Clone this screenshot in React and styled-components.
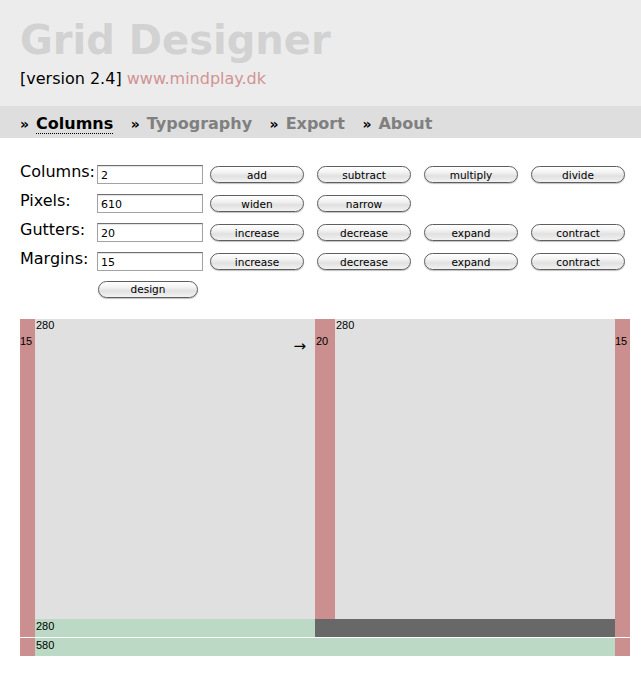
import React from 'react';
import styled, { createGlobalStyle } from 'styled-components';

const GlobalStyle = createGlobalStyle`
    html, body {
        margin: 0;
        padding: 0;
        background: #ffffff;
        font-family: "DejaVu Sans", Verdana, sans-serif;
        color: #000;
    }
`;

const Header = styled.header`
    background: #ececec;
    height: 106px;
    padding: 16px 20px 0;
    box-sizing: border-box;
`;

const Title = styled.h1`
    margin: 0;
    font-size: 40px;
    line-height: 48px;
    font-weight: bold;
    color: #d2d2d2;
`;

const Version = styled.div`
    margin-top: 5px;
    font-size: 16px;
    line-height: 20px;

    a {
        color: #d19393;
        text-decoration: none;
    }
`;

const Nav = styled.nav`
    background: #dedede;
    height: 32px;
    box-sizing: border-box;
    display: flex;
    align-items: center;
    gap: 17.5px;
    padding: 3px 20px 0;
`;

const NavItem = styled.span`
    font-size: 16px;
    font-weight: bold;
    line-height: 20px;
    color: #000;

    a {
        margin-left: 7px;
        text-decoration: none;
        color: ${(p) => (p.$active ? '#000' : '#808080')};
        border-bottom: ${(p) => (p.$active ? '1px dotted #000' : 'none')};
    }
`;

const Quote = styled.span`
    font-size: 14px;
`;

const Form = styled.div`
    padding: 27px 20px 0;
`;

const FieldRow = styled.div`
    display: flex;
    align-items: flex-start;
    margin-bottom: 10px;
`;

const Label = styled.label`
    flex: none;
    width: 77px;
    font-size: 16px;
    line-height: 18px;
    margin-top: -2px;
`;

const Input = styled.input`
    flex: none;
    width: 106px;
    height: 19px;
    box-sizing: border-box;
    border: 1px solid #a3a3a3;
    border-top-color: #6f6f6f;
    box-shadow: inset 0 1px 1px rgba(0, 0, 0, 0.12);
    padding: 1px 3px 0;
    font-family: "DejaVu Sans", Verdana, sans-serif;
    font-size: 11px;
    margin: 0;
    outline: none;
`;

const Buttons = styled.div`
    display: flex;
    gap: 13px;
    margin-left: 7px;
    padding-top: 1px;
`;

const Button = styled.button`
    flex: none;
    width: ${(p) => (p.$wide ? '100px' : '94px')};
    height: 17px;
    box-sizing: border-box;
    border: 1px solid #5e5e5e;
    border-radius: 9px;
    background: linear-gradient(to bottom, #ffffff 0%, #f3f3f3 35%, #e1e1e1 60%, #f2f2f2 100%);
    box-shadow: 0 1px 1px rgba(0, 0, 0, 0.25);
    font-family: "DejaVu Sans", Verdana, sans-serif;
    font-size: 10.5px;
    line-height: 14px;
    color: #000;
    padding: 0;
    margin: 0;
    cursor: pointer;
`;

const DesignRow = styled.div`
    padding-left: 78px;
    margin-top: -3px;
`;

const Grid = styled.div`
    margin: 21px 11px 0 20px;
    width: 610px;
    font-family: "Liberation Sans", Arial, sans-serif;
    font-size: 11px;
    line-height: 13px;
`;

const GridRow = styled.div`
    display: flex;
    height: ${(p) => p.$height}px;
    & + & {
        margin-top: 1px;
    }
`;

const Margin = styled.div`
    width: 15px;
    flex: none;
    background: #cc8f8f;
    padding-top: ${(p) => (p.$label ? '16px' : '0')};
    box-sizing: border-box;
`;

const Column = styled.div`
    position: relative;
    width: ${(p) => p.$width}px;
    flex: none;
    display: flex;
    flex-direction: column;
`;

const Area = styled.div`
    flex: 1;
    background: ${(p) => p.$bg};
    padding-top: ${(p) => p.$pad || 0}px;
    padding-left: 1px;
    box-sizing: border-box;
`;

const Strip = styled.div`
    height: 18px;
    flex: none;
    background: ${(p) => p.$bg};
    padding: 1px 0 0 1px;
    box-sizing: border-box;
`;

const Arrow = styled.span`
    position: absolute;
    right: 9px;
    top: 19px;
    font-family: "DejaVu Sans", sans-serif;
    font-size: 15px;
    line-height: 16px;
`;

const GREEN = '#bbd9c4';
const GRAY = '#e0e0e0';
const DARK = '#686868';
const PINK = '#cc8f8f';

const rows = [
    { label: 'Columns:', value: '2', buttons: ['add', 'subtract', 'multiply', 'divide'] },
    { label: 'Pixels:', value: '610', buttons: ['widen', 'narrow'] },
    { label: 'Gutters:', value: '20', buttons: ['increase', 'decrease', 'expand', 'contract'] },
    { label: 'Margins:', value: '15', buttons: ['increase', 'decrease', 'expand', 'contract'] },
];

const navItems = ['Columns', 'Typography', 'Export', 'About'];

export default function App() {
    return (
        <>
            <GlobalStyle />
            <Header>
                <Title>Grid Designer</Title>
                <Version>
                    [version 2.4] <a href="#">www.mindplay.dk</a>
                </Version>
            </Header>
            <Nav>
                {navItems.map((item, i) => (
                    <NavItem key={item} $active={i === 0}>
                        <Quote>»</Quote>
                        <a href="#">{item}</a>
                    </NavItem>
                ))}
            </Nav>

            <Form>
                {rows.map((row) => (
                    <FieldRow key={row.label}>
                        <Label>{row.label}</Label>
                        <Input defaultValue={row.value} />
                        <Buttons>
                            {row.buttons.map((b) => (
                                <Button key={b}>{b}</Button>
                            ))}
                        </Buttons>
                    </FieldRow>
                ))}
                <DesignRow>
                    <Button $wide>design</Button>
                </DesignRow>
            </Form>

            <Grid>
                <GridRow $height={318}>
                    <Margin $label>15</Margin>
                    <Column $width={280}>
                        <Area $bg={GRAY}>280</Area>
                        <Strip $bg={GREEN}>280</Strip>
                        <Arrow>→</Arrow>
                    </Column>
                    <Column $width={20}>
                        <Area $bg={PINK} $pad={16}>20</Area>
                        <Strip $bg={DARK} />
                    </Column>
                    <Column $width={280}>
                        <Area $bg={GRAY}>280</Area>
                        <Strip $bg={DARK} />
                    </Column>
                    <Margin $label>15</Margin>
                </GridRow>
                <GridRow $height={18}>
                    <Margin />
                    <Column $width={580}>
                        <Strip $bg={GREEN}>580</Strip>
                    </Column>
                    <Margin />
                </GridRow>
            </Grid>
        </>
    );
}
